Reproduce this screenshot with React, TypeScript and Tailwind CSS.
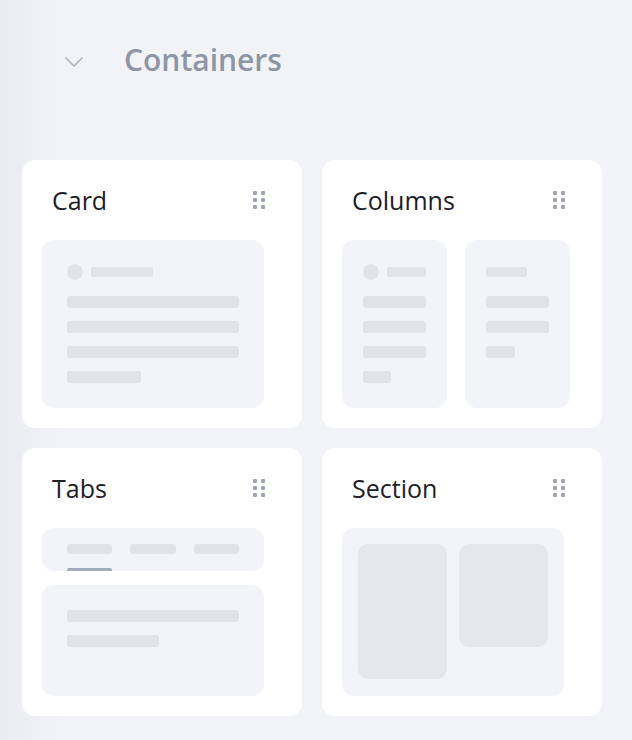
import React from 'react';

function DragDots() {
  return <div className="grid grid-cols-2 gap-x-1 gap-y-[3px]">
      {[0, 1, 2, 3, 4, 5].map(i => <span key={i} className="block w-1 h-1 rounded-[1px] bg-[#9ea5b1]" />)}
    </div>;
}

function Bar({ className }: { className: string }) {
  return <div className={`rounded-[3px] bg-[#e1e3e7] ${className}`} />;
}

function Tile({ title, children }: { title: string; children: React.ReactNode }) {
  return <div className="bg-white rounded-[13px] pt-[25px] pb-5 pl-5 h-[268px]">
      <div className="flex items-center justify-between w-[223px] h-[30px] pl-[10px]">
        <span className="text-[25px] leading-[30px] text-[#1d2127]">{title}</span>
        <DragDots />
      </div>
      <div className="mt-[25px]">{children}</div>
    </div>;
}

function CardPreview() {
  return <div className="w-[222px] h-[168px] rounded-xl bg-[#f3f4f7] pt-6 pl-[25px]">
      <div className="flex items-center gap-2 h-4">
        <div className="w-4 h-4 rounded-full bg-[#e1e3e7]" />
        <Bar className="w-[62px] h-[10px]" />
      </div>
      <div className="flex flex-col gap-[13px] mt-4">
        <Bar className="w-[172px] h-3" />
        <Bar className="w-[172px] h-3" />
        <Bar className="w-[172px] h-3" />
        <Bar className="w-[74px] h-3" />
      </div>
    </div>;
}

function ColumnsPreview() {
  return <div className="flex gap-[18px] w-[228px]">
      <div className="w-[105px] h-[168px] rounded-xl bg-[#f3f4f7] pt-6 pl-[21px]">
        <div className="flex items-center gap-2 h-4">
          <div className="w-4 h-4 rounded-full bg-[#e1e3e7]" />
          <Bar className="w-[39px] h-[10px]" />
        </div>
        <div className="flex flex-col gap-[13px] mt-4">
          <Bar className="w-[63px] h-3" />
          <Bar className="w-[63px] h-3" />
          <Bar className="w-[63px] h-3" />
          <Bar className="w-[28px] h-3" />
        </div>
      </div>
      <div className="w-[105px] h-[168px] rounded-xl bg-[#f3f4f7] pt-6 pl-[21px]">
        <div className="flex items-center h-4">
          <Bar className="w-[41px] h-[10px]" />
        </div>
        <div className="flex flex-col gap-[13px] mt-4">
          <Bar className="w-[63px] h-3" />
          <Bar className="w-[63px] h-3" />
          <Bar className="w-[29px] h-3" />
        </div>
      </div>
    </div>;
}

function TabsPreview() {
  return <div className="w-[222px]">
      <div className="relative h-[43px] rounded-xl bg-[#f3f4f7] pt-4 pl-[25px] flex gap-[18px]">
        <Bar className="w-[45px] h-[10px]" />
        <Bar className="w-[46px] h-[10px]" />
        <Bar className="w-[45px] h-[10px]" />
        <div className="absolute left-[25px] bottom-0 w-[45px] h-[3px] rounded-t-[2px] bg-[#a3adbb]" />
      </div>
      <div className="mt-[14px] h-[111px] rounded-xl bg-[#f3f4f7] pt-[25px] pl-[25px] flex flex-col gap-[13px]">
        <Bar className="w-[172px] h-3" />
        <Bar className="w-[92px] h-3" />
      </div>
    </div>;
}

function SectionPreview() {
  return <div className="w-[222px] h-[168px] rounded-xl bg-[#f3f4f7] p-4 flex gap-3 items-start">
      <div className="w-[89px] h-[135px] rounded-[10px] bg-[#e6e7ea]" />
      <div className="w-[89px] h-[103px] rounded-[10px] bg-[#e6e7ea]" />
    </div>;
}

export default function App() {
  return <div className="w-[632px] h-[740px] overflow-hidden bg-[linear-gradient(to_right,#eaecf0_0px,#f2f3f7_60px)] pl-[22px] font-['Open_Sans',sans-serif]">
      <div className="flex items-center pt-[42px] pl-[43px] h-[78px]">
        <svg width="18" height="10" viewBox="0 0 18 10" fill="none" className="mt-1">
          <polyline points="1,1 9,9 17,1" stroke="#aab2bf" strokeWidth="1.6" strokeLinecap="round" strokeLinejoin="round" />
        </svg>
        <span className="ml-[41px] text-[30px] leading-[36px] font-semibold text-[#8d96a5]">Containers</span>
      </div>
      <div className="grid grid-cols-[280px_280px] gap-5 mt-[82px]">
        <Tile title="Card"><CardPreview /></Tile>
        <Tile title="Columns"><ColumnsPreview /></Tile>
        <Tile title="Tabs"><TabsPreview /></Tile>
        <Tile title="Section"><SectionPreview /></Tile>
      </div>
    </div>;
}
